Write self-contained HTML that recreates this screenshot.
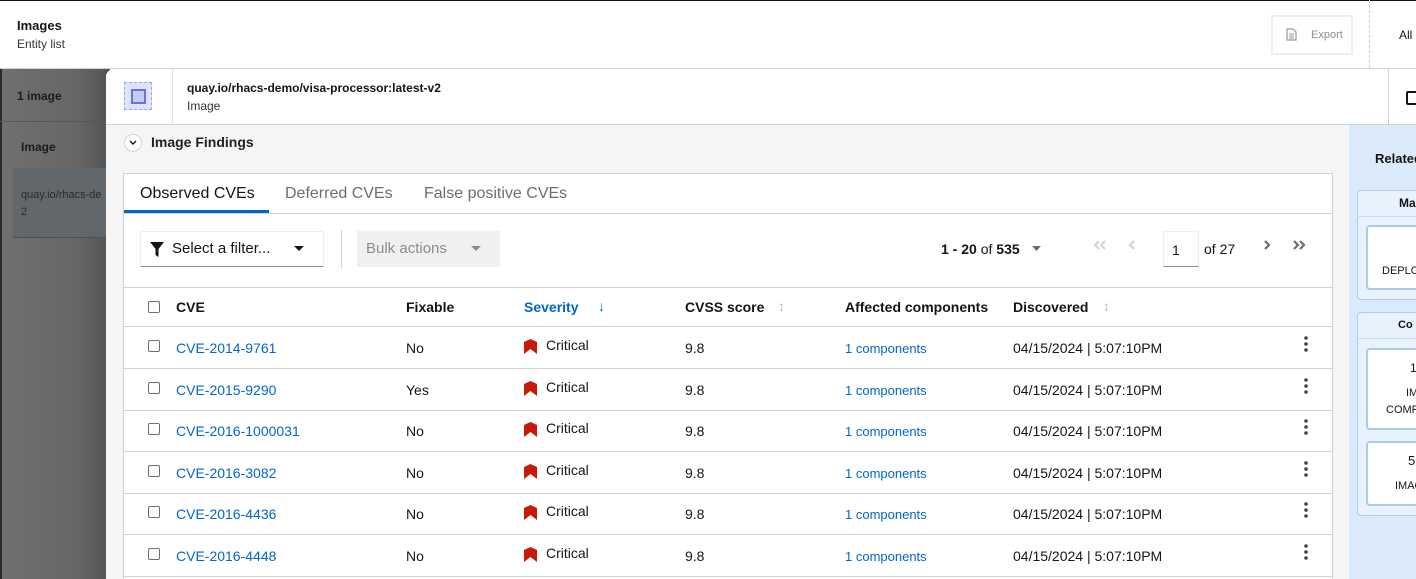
<!DOCTYPE html>
<html><head><meta charset="utf-8"><style>
*{box-sizing:border-box;margin:0;padding:0}
html,body{width:1416px;height:579px;overflow:hidden}
body{font-family:"Liberation Sans",sans-serif;font-size:14px;color:#151515;background:#fff;position:relative}
.abs{position:absolute}
a{color:#0066cc;text-decoration:none}
.cb{position:absolute;width:12px;height:12px;border:1px solid #6a6e73;border-radius:2px;background:#fff}
</style></head><body>
<div class="abs" style="left:0;top:0;width:1416px;height:1px;background:#151515"></div>
<div class="abs" style="left:17px;top:18px;font-size:13px;font-weight:bold">Images</div>
<div class="abs" style="left:17px;top:37px;font-size:12px;color:#333">Entity list</div>
<div class="abs" style="left:1271px;top:15px;width:82px;height:40px;border:2px solid #eee;border-radius:2px;color:#8a8d90;font-size:11px;padding:12px 0 0 38px">Export</div>
<svg class="abs" style="left:1286px;top:28px" width="11" height="13"><path d="M1 1h6l3 3v8H1z" fill="none" stroke="#999" stroke-width="1.2"/><path d="M3 6h5M3 8h5M3 10h5" stroke="#999"/></svg>
<div class="abs" style="left:1369px;top:0;height:68px;border-left:1px dashed #ccc"></div>
<div class="abs" style="left:1399px;top:28px;font-size:12px">All</div>
<div class="abs" style="left:0;top:68px;width:1416px;height:1px;background:#d2d2d2"></div>
<div class="abs" style="left:0;top:69px;width:110px;height:510px;background:linear-gradient(90deg,#707070,#666 70%,#525355)"></div>
<div class="abs" style="left:0;top:69px;width:2px;height:510px;background:#2a2a2a"></div>
<div class="abs" style="left:17px;top:89px;font-size:12px;font-weight:bold;color:#1c1c1c">1 image</div>
<div class="abs" style="left:0;top:121px;width:110px;height:1px;background:#575757"></div>
<div class="abs" style="left:21px;top:140px;font-size:12px;font-weight:bold;color:#1c1c1c">Image</div>
<div class="abs" style="left:13px;top:168px;width:97px;height:70px;background:#62676b;border-bottom:1px solid #4a5058"></div>
<div class="abs" style="left:21px;top:187px;font-size:11px;color:#2a2a2a;line-height:17px;width:89px;overflow:hidden;white-space:nowrap">quay.io/rhacs-de<br>2</div>
<div class="abs" style="left:106px;top:69px;width:1310px;height:510px;background:#f5f5f5;border-top-left-radius:8px;overflow:hidden">
 <div class="abs" style="left:0;top:0;width:1310px;height:56px;background:#fff;border-bottom:1px solid #d2d2d2"></div>
 <div class="abs" style="left:66px;top:0;width:1px;height:56px;background:#e0e0e0"></div>
 <div class="abs" style="left:1282px;top:0;width:1px;height:56px;background:#d2d2d2"></div>
 <div class="abs" style="left:18px;top:13px;width:28px;height:28px;border:1px dashed #9aa4f5;background:#dfe3fd"></div>
 <div class="abs" style="left:25px;top:20px;width:15px;height:15px;border:2px solid #6b74d6;background:#c4cbfb"></div>
 <div class="abs" style="left:81px;top:12px;font-size:12px;font-weight:bold">quay.io/rhacs-demo/visa-processor:latest-v2</div>
 <div class="abs" style="left:81px;top:30px;font-size:12px;color:#333">Image</div>
 <div class="abs" style="left:1300px;top:22px;width:14px;height:14px;border:2px solid #151515;border-radius:2px"></div>
 <div class="abs" style="left:18px;top:65px;width:18px;height:18px;border:1px solid #d2d2d2;border-radius:50%;background:#fff"></div>
 <svg class="abs" style="left:23px;top:71px" width="8" height="6"><path d="M1 1l3 3 3-3" fill="none" stroke="#151515" stroke-width="1.4"/></svg>
 <div class="abs" style="left:45px;top:65px;font-size:14px;font-weight:bold;color:#222">Image Findings</div>
 <div class="abs" style="left:1243px;top:56px;width:67px;height:454px;background:#dbeafa"></div>
 <div class="abs" style="left:1269px;top:82px;font-size:13px;font-weight:bold;white-space:nowrap">Related</div>
 <div class="abs" style="left:1251px;top:121px;width:70px;height:110px;border:1px solid #aecdf0;border-radius:4px;background:#e8f2fd"></div>
 <div class="abs" style="left:1251px;top:147px;width:70px;height:1px;background:#c6dcf3"></div>
 <div class="abs" style="left:1293px;top:127px;font-size:12px;font-weight:bold">Ma</div>
 <div class="abs" style="left:1260px;top:156px;width:60px;height:65px;border:2px solid #a8cbef;border-radius:4px;background:#fff"></div>
 <div class="abs" style="left:1276px;top:196px;font-size:11px;white-space:nowrap">DEPLO</div>
 <div class="abs" style="left:1251px;top:243px;width:70px;height:204px;border:1px solid #aecdf0;border-radius:4px;background:#e8f2fd"></div>
 <div class="abs" style="left:1251px;top:269px;width:70px;height:1px;background:#c6dcf3"></div>
 <div class="abs" style="left:1292px;top:250px;font-size:11px;font-weight:bold">Co</div>
 <div class="abs" style="left:1260px;top:279px;width:60px;height:82px;border:2px solid #a8cbef;border-radius:4px;background:#fff"></div>
 <div class="abs" style="left:1304px;top:292px;font-size:12px">1</div>
 <div class="abs" style="left:1300px;top:318px;font-size:11px">IM</div>
 <div class="abs" style="left:1280px;top:335px;font-size:11px;white-space:nowrap">COMP</div>
 <div class="abs" style="left:1260px;top:372px;width:60px;height:65px;border:2px solid #a8cbef;border-radius:4px;background:#fff"></div>
 <div class="abs" style="left:1302px;top:384px;font-size:13px">5</div>
 <div class="abs" style="left:1289px;top:411px;font-size:11px">IMAG</div>
 <div class="abs" style="left:17px;top:104px;width:1210px;height:406px;background:#fff;border:1px solid #d2d2d2;border-bottom:none;overflow:hidden">
  <div class="abs" style="left:0;top:39px;width:1208px;height:1px;background:#d2d2d2"></div>
  <div class="abs" style="left:16px;top:11px;font-size:16px;color:#151515">Observed CVEs</div>
  <div class="abs" style="left:0;top:36px;width:145px;height:3px;background:#0066cc"></div>
  <div class="abs" style="left:161px;top:11px;font-size:16px;color:#6a6e73">Deferred CVEs</div>
  <div class="abs" style="left:300px;top:11px;font-size:16px;color:#6a6e73">False positive CVEs</div>
  <div class="abs" style="left:16px;top:57px;width:184px;height:36px;border:1px solid #eee;border-bottom:1px solid #8a8d90"></div>
  <svg class="abs" style="left:26px;top:68px" width="14" height="15"><path d="M0 0h14L8.5 7v8l-3-2V7z" fill="#151515"/></svg>
  <div class="abs" style="left:48px;top:66px;font-size:15px">Select a filter...</div>
  <svg class="abs" style="left:170px;top:72px" width="10" height="6"><path d="M0 0h10L5 5z" fill="#151515"/></svg>
  <div class="abs" style="left:217px;top:56px;width:1px;height:38px;background:#d2d2d2"></div>
  <div class="abs" style="left:233px;top:57px;width:143px;height:36px;background:#f0f0f0"></div>
  <div class="abs" style="left:242px;top:66px;font-size:15px;color:#8a8d90">Bulk actions</div>
  <svg class="abs" style="left:347px;top:72px" width="10" height="6"><path d="M0 0h10L5 5z" fill="#8a8d90"/></svg>
  <div class="abs" style="left:817px;top:67px;font-size:14px"><b>1 - 20</b> of <b>535</b></div>
  <svg class="abs" style="left:908px;top:72px" width="9" height="5"><path d="M0 0h9L4.5 5z" fill="#6a6e73"/></svg>
  <svg class="abs" style="left:969px;top:66px" width="14" height="10"><path d="M6 1L2 5l4 4M12 1L8 5l4 4" fill="none" stroke="#d2d2d2" stroke-width="2"/></svg>
  <svg class="abs" style="left:1004px;top:66px" width="8" height="10"><path d="M6 1L2 5l4 4" fill="none" stroke="#d2d2d2" stroke-width="2"/></svg>
  <div class="abs" style="left:1039px;top:57px;width:36px;height:36px;border:1px solid #eee;border-bottom:1px solid #8a8d90;padding:10px 0 0 8px;font-size:14px">1</div>
  <div class="abs" style="left:1080px;top:67px;font-size:14px">of 27</div>
  <svg class="abs" style="left:1139px;top:66px" width="8" height="10"><path d="M2 1l4 4-4 4" fill="none" stroke="#6a6e73" stroke-width="2.2"/></svg>
  <svg class="abs" style="left:1168px;top:66px" width="14" height="10"><path d="M2 1l4 4-4 4M8 1l4 4-4 4" fill="none" stroke="#6a6e73" stroke-width="2.2"/></svg>
  <div class="abs" style="left:0;top:113px;width:1208px;height:1px;background:#d2d2d2"></div>
  <div class="cb" style="left:24px;top:127px"></div>
  <div class="abs" style="left:52px;top:125px;font-weight:bold">CVE</div>
  <div class="abs" style="left:282px;top:125px;font-weight:bold">Fixable</div>
  <div class="abs" style="left:400px;top:125px;font-weight:bold;color:#0066cc">Severity</div>
  <div class="abs" style="left:474px;top:124px;font-weight:bold;color:#0066cc">↓</div>
  <div class="abs" style="left:561px;top:125px;font-weight:bold">CVSS score</div>
  <div class="abs" style="left:654px;top:124px;color:#b8bbbe">↕</div>
  <div class="abs" style="left:721px;top:125px;font-weight:bold">Affected components</div>
  <div class="abs" style="left:889px;top:125px;font-weight:bold">Discovered</div>
  <div class="abs" style="left:979px;top:124px;color:#b8bbbe">↕</div>
  <div class="abs" style="left:0;top:152px;width:1208px;height:1px;background:#d2d2d2"></div>
  <div id="rows"></div>
 </div>
</div>
<script>
var c=["CVE-2014-9761","CVE-2015-9290","CVE-2016-1000031","CVE-2016-3082","CVE-2016-4436","CVE-2016-4448"],f=["No","Yes","No","No","No","No"],h="";
for(var i=0;i<6;i++){var t=153+i*41.5;
h+='<div class="cb" style="left:24px;top:'+(t+13)+'px"></div>'+
'<div class="abs" style="left:52px;top:'+(t+13)+'px"><a>'+c[i]+'</a></div>'+
'<div class="abs" style="left:282px;top:'+(t+13)+'px">'+f[i]+'</div>'+
'<svg class="abs" style="left:400px;top:'+(t+12)+'px" width="13" height="15"><path d="M0 3L6.5 0L13 3V15L6.5 10L0 15z" fill="#c9190b"/></svg>'+
'<div class="abs" style="left:422px;top:'+(t+10)+'px">Critical</div>'+
'<div class="abs" style="left:561px;top:'+(t+13)+'px">9.8</div>'+
'<div class="abs" style="left:721px;top:'+(t+14)+'px;font-size:13px"><a>1 components</a></div>'+
'<div class="abs" style="left:889px;top:'+(t+13)+'px">04/15/2024 | 5:07:10PM</div>'+
'<svg class="abs" style="left:1180px;top:'+(t+9)+'px" width="4" height="16"><circle cx="2" cy="2" r="1.8" fill="#444"/><circle cx="2" cy="8" r="1.8" fill="#444"/><circle cx="2" cy="14" r="1.8" fill="#444"/></svg>'+
'<div class="abs" style="left:0;top:'+(t+41)+'px;width:1208px;height:1px;background:#d2d2d2"></div>';}
document.getElementById('rows').innerHTML=h;
</script>
</body></html>
